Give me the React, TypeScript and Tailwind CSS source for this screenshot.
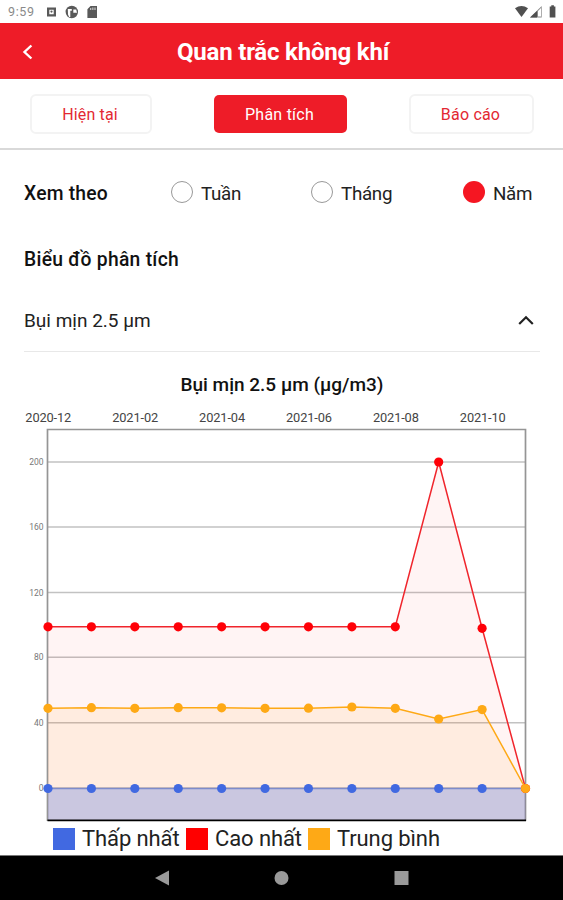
import React from "react";

const STEP = 43.41;
const LEFT = 48;
const ZERO = 428.5;
const xs = Array.from({ length: 12 }, (_, i) => LEFT + i * STEP);

const redY = [266.8, 266.8, 266.8, 266.8, 266.8, 266.8, 266.8, 266.8, 266.8, 102, 268.3, 428.5];
const orangeY = [348.3, 347.7, 348.3, 347.7, 347.8, 348.3, 348.2, 347, 348.3, 359, 349.6, 428.5];
const blueY = xs.map(() => ZERO);

const months = ["2020-12", "2021-02", "2021-04", "2021-06", "2021-08", "2021-10"];
const ticks = [
  { label: "200", y: 102 },
  { label: "160", y: 167 },
  { label: "120", y: 232.5 },
  { label: "80", y: 297.3 },
  { label: "40", y: 362.7 },
  { label: "0", y: 428 },
];

const line = (ys: number[]) => ys.map((y, i) => `${xs[i]},${y}`).join(" ");
const area = (ys: number[]) => `${line(ys)} ${xs[11]},460.5 ${LEFT},460.5`;

function Series({ ys, color, stroke = color, count = 12 }: { ys: number[]; color: string; stroke?: string; count?: number }) {
  return (
    <g>
      <polyline points={line(ys)} fill="none" stroke={stroke} strokeWidth="1.5" />
      {ys.slice(0, count).map((y, i) => (
        <circle key={i} cx={xs[i]} cy={y} r="4.6" fill={color} />
      ))}
    </g>
  );
}

function Chart() {
  return (
    <svg width="563" height="462" viewBox="0 0 563 462" className="block shrink-0">
      <text x="180.5" y="31" textLength="203" className="fill-[#111] text-[19px] font-medium">
        Bụi mịn 2.5 µm (µg/m3)
      </text>
      {months.map((m, i) => (
        <text key={m} x={48.3 + i * 86.9} y="62.4" textAnchor="middle" textLength="46" className="fill-[#444] text-[12.8px]">
          {m}
        </text>
      ))}
      {ticks.map((t) => (
        <g key={t.label}>
          <text x="43.5" y={t.y + 3} textAnchor="end" className="fill-[#777] text-[8.5px]">
            {t.label}
          </text>
          <line x1={LEFT} x2="525.5" y1={t.y} y2={t.y} stroke="#c2c2c2" strokeWidth="1.5" />
        </g>
      ))}
      <path d="M47.5 461V69.5H525.5V461" fill="none" stroke="#959595" strokeWidth="1.7" />
      <polygon points={area(redY)} fill="#ff0000" fillOpacity="0.042" />
      <polygon points={area(orangeY)} fill="#ffa020" fillOpacity="0.095" />
      <polygon points={area(blueY)} fill="#4169e1" fillOpacity="0.28" />
      <Series ys={redY} color="#ff0007" stroke="#f0252c" />
      <Series ys={blueY} color="#4169e1" stroke="#7d8bcb" count={11} />
      <Series ys={orangeY} color="#fea916" />
      <line x1="47.5" x2="526" y1="460.4" y2="460.4" stroke="#000" strokeWidth="1.6" />
    </svg>
  );
}

function StatusBar() {
  return (
    <div className="flex h-[23px] shrink-0 items-center justify-between">
      <div className="flex items-center pl-[8px]">
        <span className="w-[38px] pt-[2px] text-[12.5px] leading-none tracking-[0.6px] text-[#8a8a8a]">9:59</span>
        <svg width="54" height="14" viewBox="0 0 54 14" fill="#595959">
          <path fillRule="evenodd" d="M1 2.5h9v9H1zM3.3 4.8v4.4h4.4V4.8z" />
          <circle cx="5.5" cy="6.6" r="1.1" />
          <circle cx="25.8" cy="7" r="6.2" />
          <path d="M21.8 4h4v1.8h-1.5V12h-1.2L22 9.5zM27.3 4.5h2.9l.8 3.2h-3.7z" fill="#fff" />
          <path fillRule="evenodd" d="M44.5 1H51v12h-9.6V4.3zM44.4 3V5h.8V3zM46.5 2.5V5h.8V2.5zM48.6 2.5V5h.8V2.5z" />
        </svg>
      </div>
      <svg width="48" height="14" viewBox="0 0 48 14" fill="#505050">
        <path d="M0 3.2Q6.5-1.3 13 3.2L6.5 12z" />
        <path d="M26.7 1v11.5H15z" fill="#8a8a8a" />
        <path d="M22 6v6.5h-7z" />
        <path d="M23 6l3-3v8.5h-3z" fill="#fff" />
        <path d="M34.7 1.6h1.6V.3h2.6v1.3h1.5v10.9h-5.7z" />
      </svg>
    </div>
  );
}

function Radio({ label, className, on = false }: { label: string; className: string; on?: boolean }) {
  return (
    <div className={`flex items-center ${className}`}>
      <span className={`mr-[8px] mb-[5px] size-[22px] shrink-0 rounded-full ${on ? "bg-[#f51622]" : "border border-[#999]"}`} />
      <span className="text-[18.8px] tracking-[-0.3px] whitespace-nowrap">{label}</span>
    </div>
  );
}

function Legend({ color, label, className }: { color: string; label: string; className: string }) {
  return (
    <div className={`flex items-center ${className}`}>
      <span className={`mr-[7px] size-[22px] shrink-0 ${color}`} />
      <span className="tracking-[-0.1px] whitespace-nowrap">{label}</span>
    </div>
  );
}

export default function App() {
  return (
    <div className="flex h-[900px] w-[563px] flex-col overflow-hidden bg-white font-[Roboto,sans-serif] text-[#222]">
      <StatusBar />
      <header className="flex h-[56px] shrink-0 items-center bg-[#ee1c28] pt-px text-white">
        <svg width="12" height="16" viewBox="0 0 12 16" className="ml-[22px]">
          <path d="M9.4 1.5L2.5 8l6.9 6.5" fill="none" stroke="#fff" strokeWidth="2.4" />
        </svg>
        <h1 className="ml-[143px] text-[24px] font-bold tracking-[-0.2px] whitespace-nowrap">Quan trắc không khí</h1>
      </header>
      <nav className="flex h-[71px] shrink-0 items-center border-b-2 border-[#d9d9d9] pl-[30px] text-[16px] text-[#e32832]">
        <button className="h-[40px] w-[122px] rounded-[6px] border-2 border-[#f3f3f3] pr-[2px] pt-[2px] tracking-[0.15px]">Hiện tại</button>
        <button className="ml-[62px] h-[38px] w-[133px] rounded-[5px] bg-[#ee1c28] pt-[2px] pr-[2px] tracking-[0.25px] text-white">Phân tích</button>
        <button className="ml-[62px] h-[40px] w-[125px] rounded-[6px] border-2 border-[#f3f3f3] pt-[2px] pr-[2px] tracking-[0.2px]">Báo cáo</button>
      </nav>
      <div className="flex h-[88px] shrink-0 items-center pl-[24px] text-[19px]">
        <span className="w-[147px] pt-px text-[19.3px] font-medium tracking-[0.2px] text-[#111]">Xem theo</span>
        <Radio label="Tuần" className="w-[140px]" />
        <Radio label="Tháng" className="w-[152px]" />
        <Radio label="Năm" on className="" />
      </div>
      <h2 className="flex h-[43px] shrink-0 items-center pt-[2px] pl-[24px] text-[19.3px] font-medium tracking-[0.28px] text-[#111]">Biểu đồ phân tích</h2>
      <div className="mr-[23px] ml-[24px] flex h-[71px] shrink-0 items-center justify-between border-b border-[#e8e8e8] pt-[11px] pr-[6px] text-[19px]">
        <span>Bụi mịn 2.5 µm</span>
        <svg width="16" height="12" viewBox="0 0 16 12" className="mb-[3px]">
          <path d="M1.2 10l6.8-6.8 6.8 6.8" fill="none" stroke="#222" strokeWidth="2.2" />
        </svg>
      </div>
      <div className="h-[8px] shrink-0" />
      <Chart />
      <div className="flex h-[33px] shrink-0 items-center pl-[53px] text-[22px]">
        <Legend color="bg-[#4169e1]" label="Thấp nhất" className="w-[133px]" />
        <Legend color="bg-[#ff0000]" label="Cao nhất" className="w-[122px]" />
        <Legend color="bg-[#fea916]" label="Trung bình" className="" />
      </div>
      <div className="flex flex-1 items-center border-t border-[#777] bg-black">
        <svg width="563" height="20" viewBox="0 0 563 20" fill="#999">
          <path d="M155 10l14-7.5v15z" />
          <circle cx="281.5" cy="10" r="7" />
          <path d="M394.5 3h14v14h-14z" />
        </svg>
      </div>
    </div>
  );
}
